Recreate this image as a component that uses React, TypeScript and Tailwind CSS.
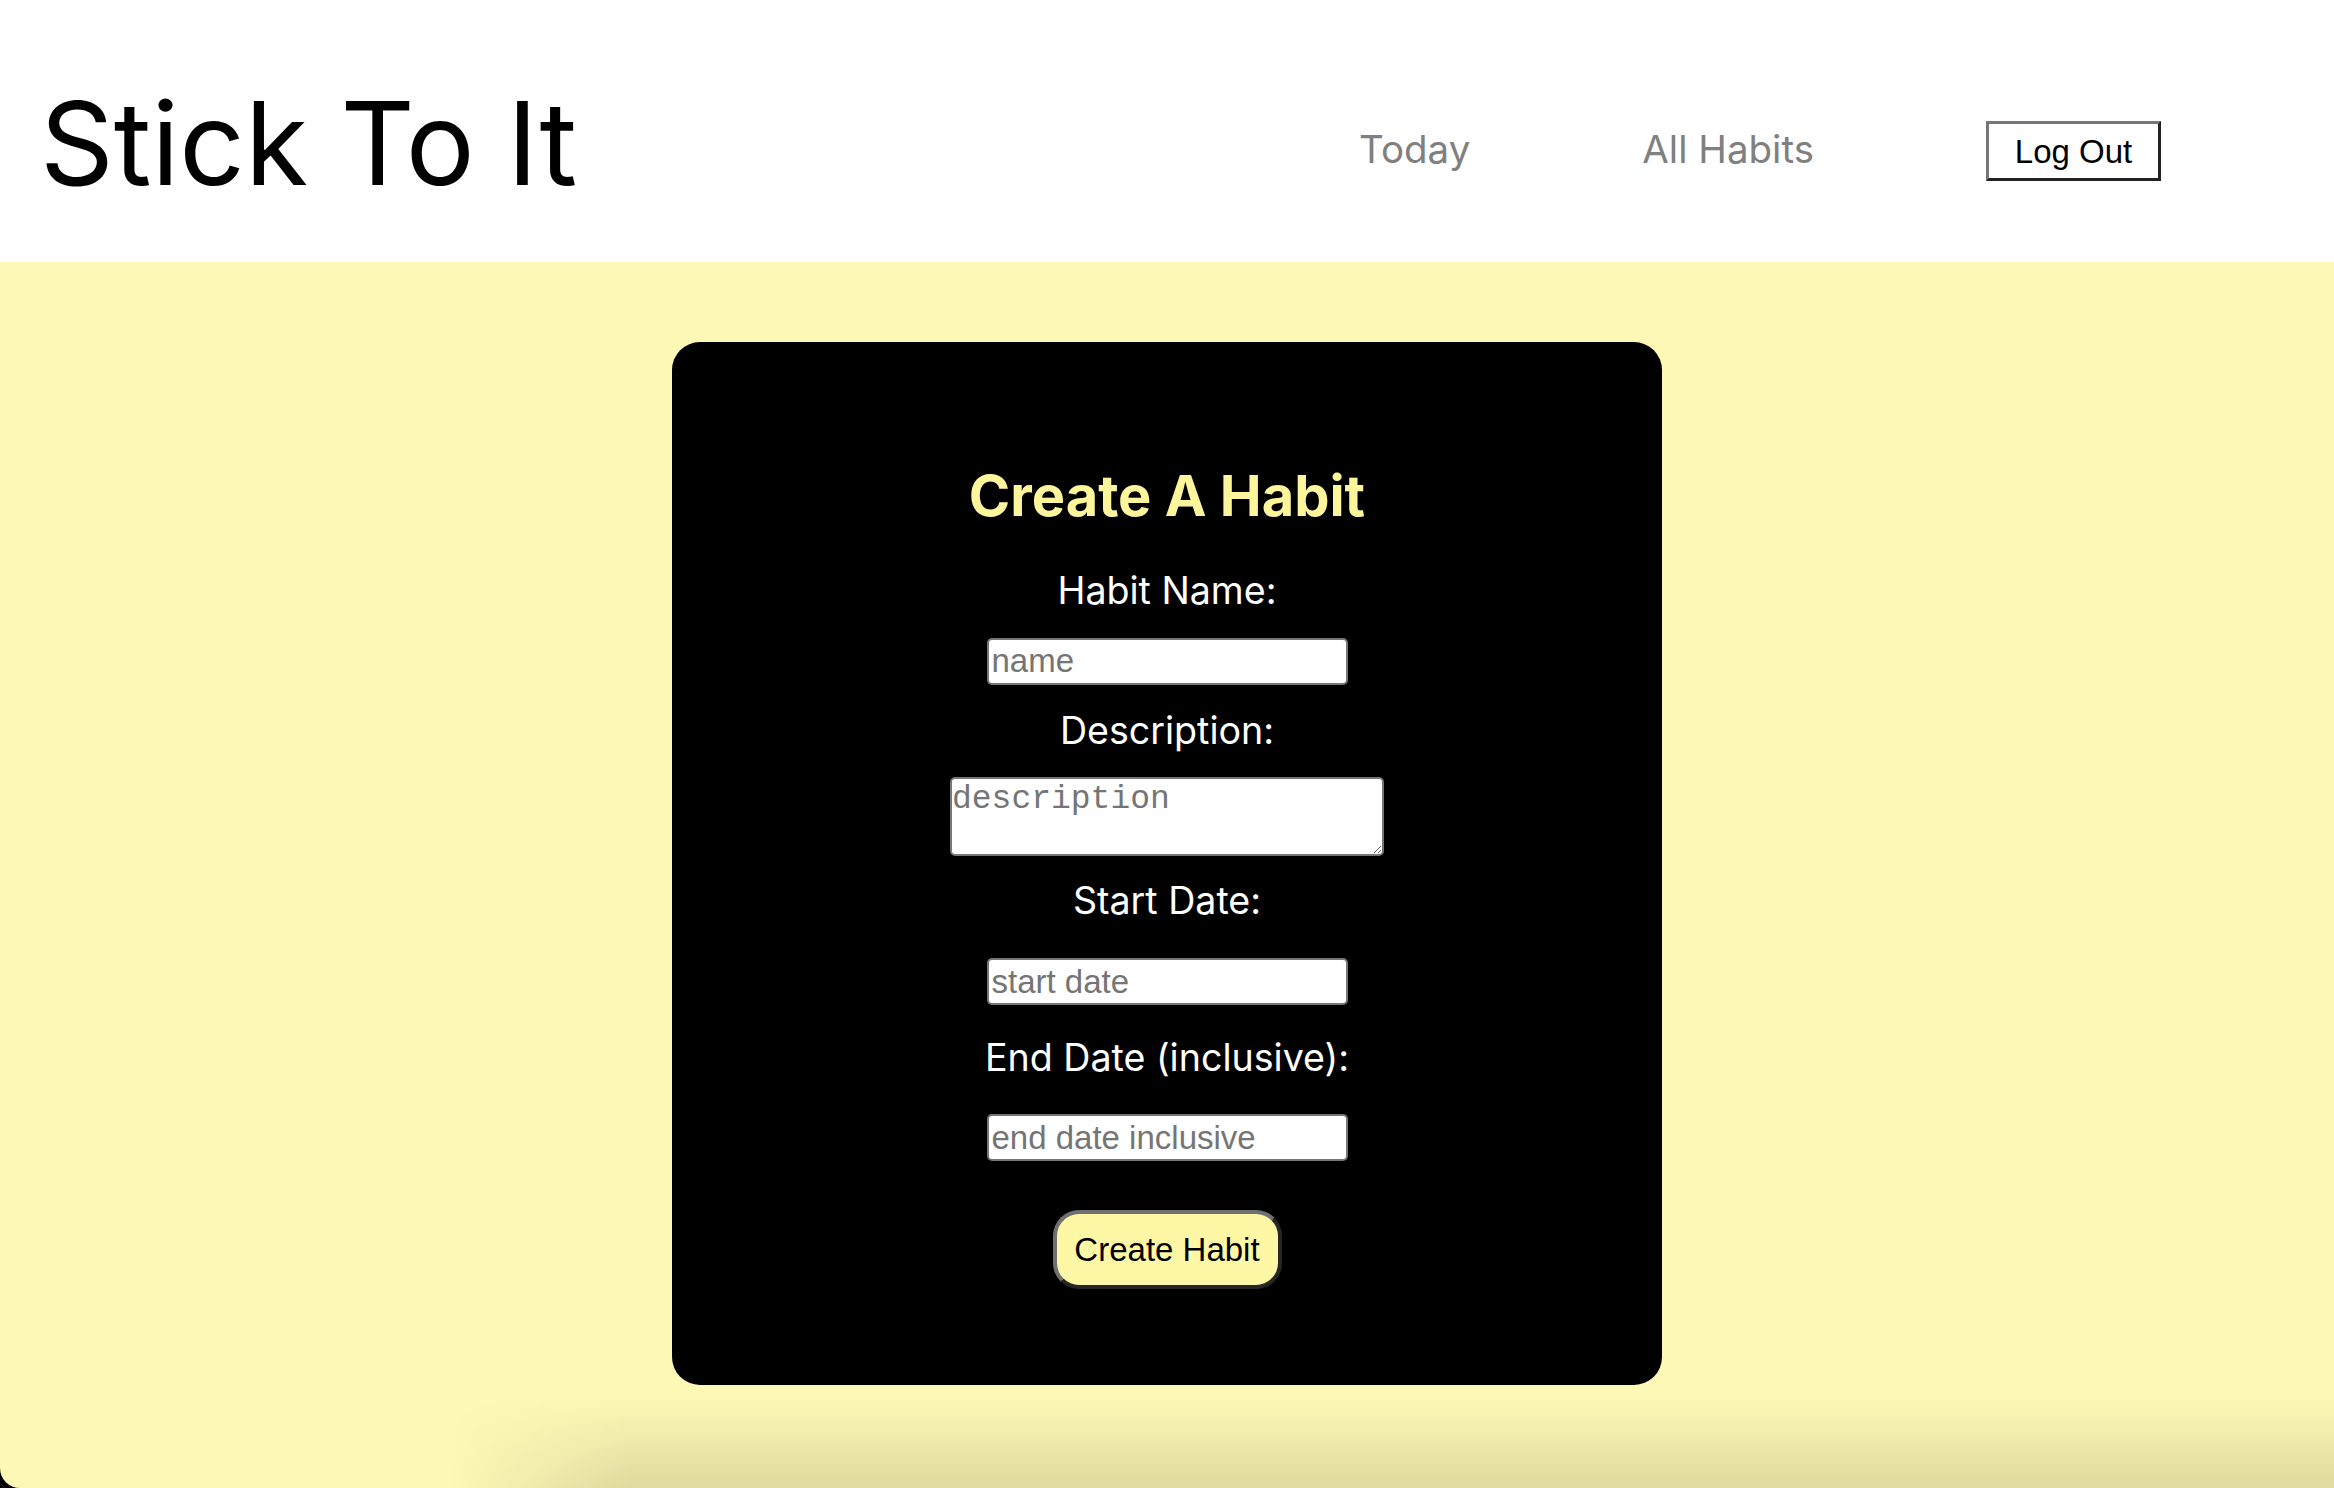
import React from "react";

const plex = { fontFamily: "Inter, 'Noto Sans', sans-serif" };

export default function App() {
  return (
    <div className="w-[2334px] h-[1488px] bg-black overflow-hidden">
      <div className="w-full h-full flex flex-col rounded-bl-[20px] overflow-hidden bg-[#fef8b6]">
        <header className="h-[262px] shrink-0 bg-white flex items-start" style={plex}>
          <h1 className="ml-[40px] mt-[86px] text-[115px] leading-none font-normal text-black font-['Inter',sans-serif]">
            Stick To It
          </h1>
          <nav className="ml-auto mr-[173px] mt-[121px] flex items-center gap-[172px] font-['Inter',sans-serif]">
            <a className="text-[38.5px] leading-none text-[#808080] pb-[4px]">Today</a>
            <a className="text-[38.5px] leading-none text-[#808080] pb-[4px]">All Habits</a>
            <button className="w-[175px] h-[60px] bg-white border-[3px] border-solid border-t-[#767676] border-l-[#767676] border-b-[#222222] border-r-[#222222] text-[33px] leading-none text-black font-['Liberation_Sans',Arial,sans-serif]">
              Log Out
            </button>
          </nav>
        </header>
        <main className="relative flex-1 flex justify-center pt-[80px]">
          <div className="w-[990px] h-[1043px] bg-black rounded-[28px] flex flex-col items-center pt-[126px] font-['Inter',sans-serif]">
            <h2 className="text-[56px] leading-none font-bold text-[#fdf59c]">Create A Habit</h2>
            <label className="mt-[48px] text-[37.6px] leading-none text-white">Habit Name:</label>
            <input
              placeholder="name"
              className="mt-[28px] w-[361px] h-[47px] bg-white border-2 border-solid border-[#767676] rounded-[5px] px-[3px] text-[33px] text-black placeholder:text-[#757575] font-['Liberation_Sans',Arial,sans-serif] outline-none"
            />
            <label className="mt-[27px] text-[37.6px] leading-none text-white">Description:</label>
            <textarea
              placeholder="description"
              className="mt-[28px] w-[434px] h-[79px] bg-white border-2 border-solid border-[#767676] rounded-[5px] px-0 pt-[2px] text-[33px] leading-[1.13] text-black placeholder:text-[#757575] font-['Liberation_Mono','Courier_New',monospace] outline-none resize"
            />
            <label className="mt-[26px] text-[37.6px] leading-none text-white">Start Date:</label>
            <input
              placeholder="start date"
              className="mt-[38px] w-[361px] h-[47px] bg-white border-2 border-solid border-[#767676] rounded-[5px] px-[3px] text-[33px] text-black placeholder:text-[#757575] font-['Liberation_Sans',Arial,sans-serif] outline-none"
            />
            <label className="mt-[34px] text-[37.6px] leading-none text-white">End Date (inclusive):</label>
            <input
              placeholder="end date inclusive"
              className="mt-[38px] w-[361px] h-[47px] bg-white border-2 border-solid border-[#767676] rounded-[5px] px-[3px] text-[33px] text-black placeholder:text-[#757575] font-['Liberation_Sans',Arial,sans-serif] outline-none"
            />
            <button className="mt-[49px] w-[229px] h-[79px] rounded-[26px] bg-[#fef8a6] border-[4px] border-solid border-t-[#707070] border-l-[#707070] border-b-[#262626] border-r-[#262626] text-[33px] leading-none text-black font-['Liberation_Sans',Arial,sans-serif]">
              Create Habit
            </button>
          </div>
          <div className="pointer-events-none absolute bottom-0 left-[450px] right-0 h-[90px] bg-linear-to-b from-transparent to-black/12 [mask-image:linear-gradient(to_right,transparent,black_180px)]" />
        </main>
      </div>
    </div>
  );
}
